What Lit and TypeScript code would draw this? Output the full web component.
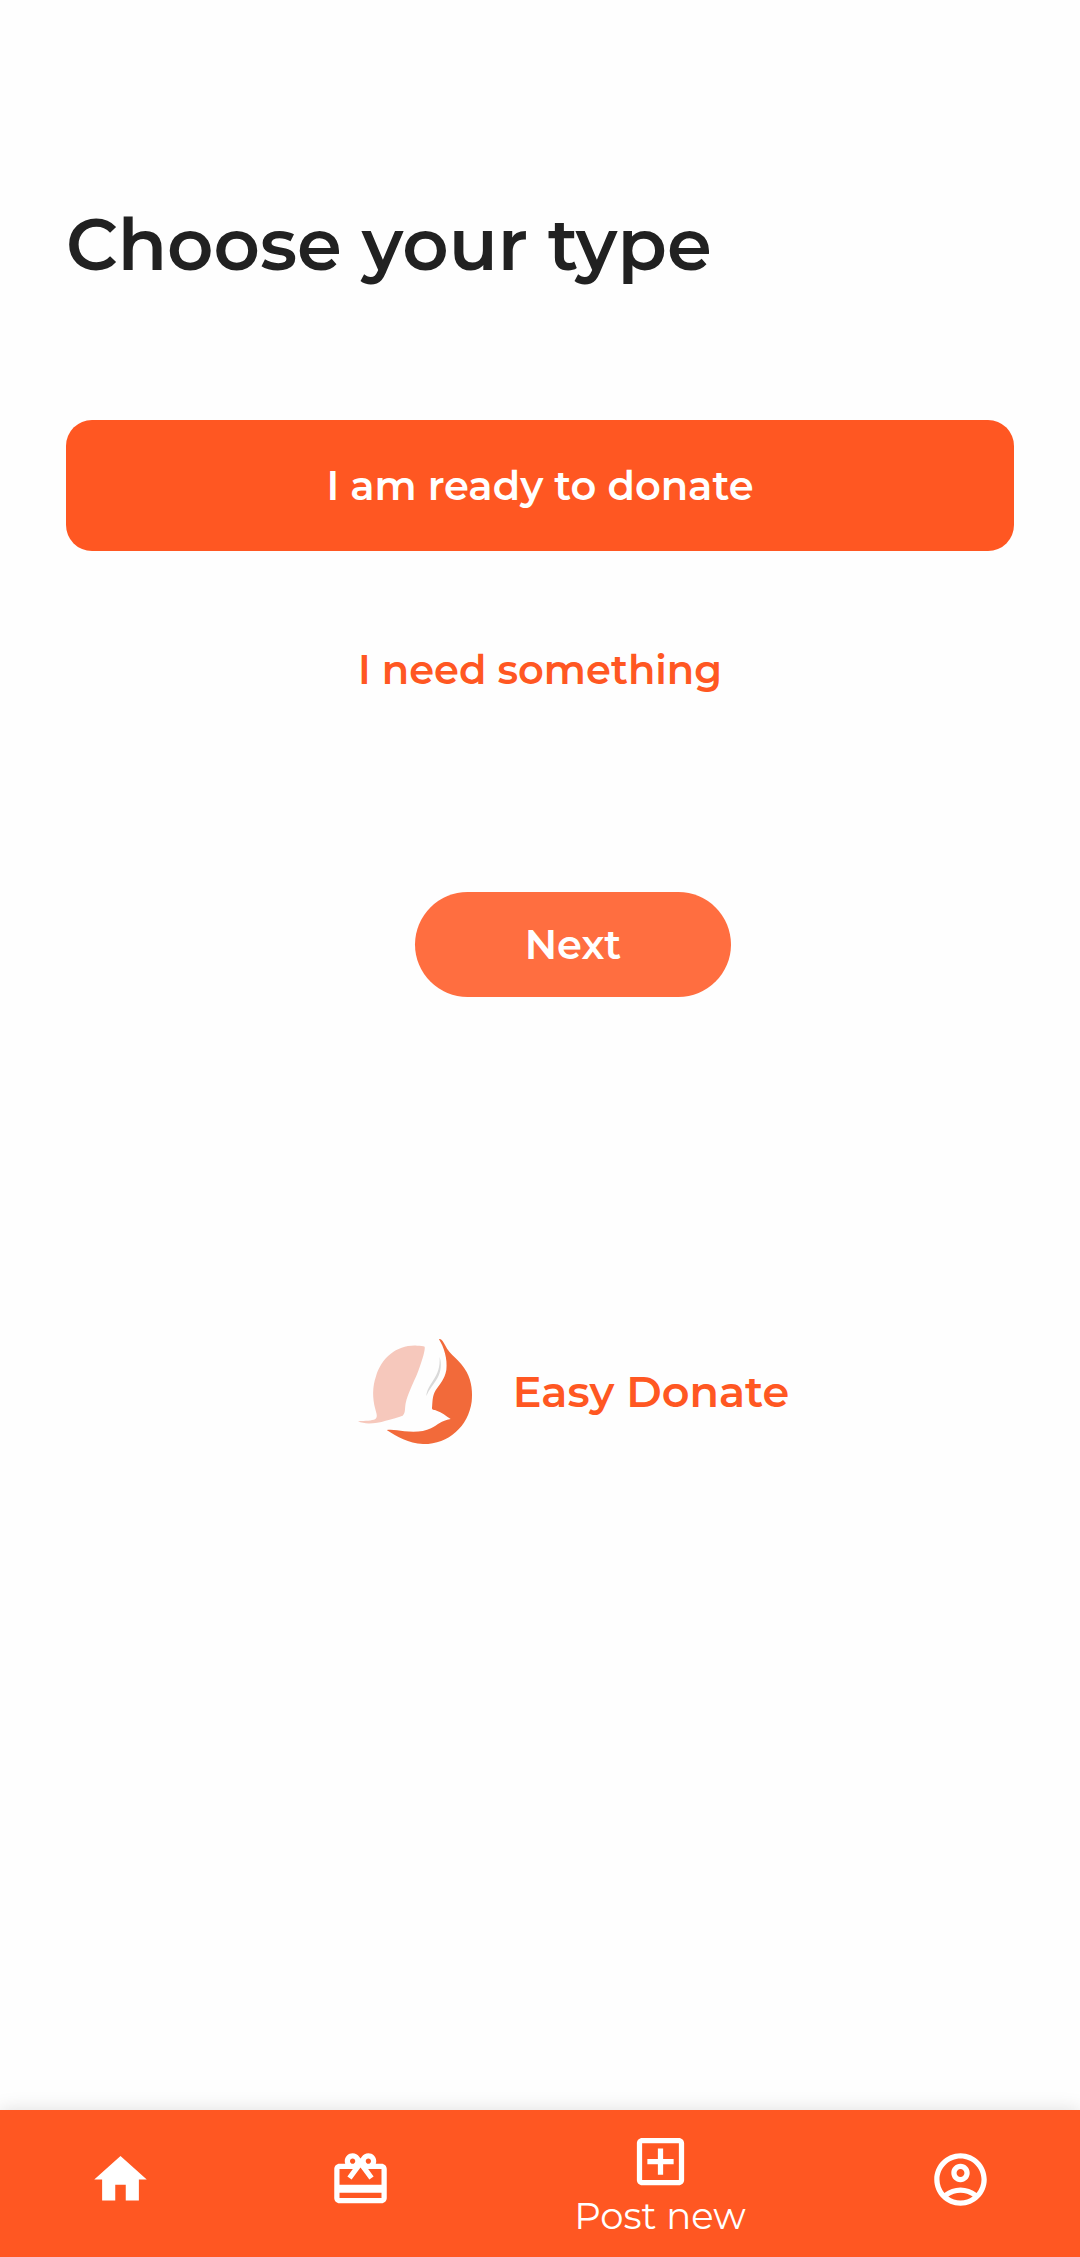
import { LitElement, html, css, svg } from "lit";
import { customElement, state } from "lit/decorators.js";
import { classMap } from "lit/directives/class-map.js";

type DonorType = "donate" | "need";

const ICONS = {
  home: svg`<path d="M10 20v-6h4v6h5v-8h3L12 3 2 12h3v8z"/>`,
  gift: svg`<path d="M20 6h-2.18c.11-.31.18-.65.18-1 0-1.66-1.34-3-3-3-1.05 0-1.96.54-2.5 1.35l-.5.67-.5-.68C10.96 2.54 10.05 2 9 2 7.34 2 6 3.34 6 5c0 .35.07.69.18 1H4c-1.11 0-1.99.89-1.99 2L2 19c0 1.11.89 2 2 2h16c1.11 0 2-.89 2-2V8c0-1.11-.89-2-2-2zm-5-2c.55 0 1 .45 1 1s-.45 1-1 1-1-.45-1-1 .45-1 1-1zM9 4c.55 0 1 .45 1 1s-.45 1-1 1-1-.45-1-1 .45-1 1-1zm11 15H4v-2h16v2zm0-5H4V8h5.08L7 10.83 8.62 12 11 8.76l1-1.36 1 1.36L15.38 12 17 10.83 14.92 8H20v6z"/>`,
  add: svg`<path d="M19 3H5c-1.11 0-2 .9-2 2v14c0 1.1.89 2 2 2h14c1.1 0 2-.9 2-2V5c0-1.1-.9-2-2-2zm0 16H5V5h14v14zm-8-2h2v-4h4v-2h-4V7h-2v4H7v2h4z"/>`,
  account: svg`<path d="M12 2C6.48 2 2 6.48 2 12s4.48 10 10 10 10-4.48 10-10S17.52 2 12 2zM7.35 18.5C8.66 17.56 10.26 17 12 17s3.34.56 4.65 1.5C15.34 19.44 13.74 20 12 20s-3.34-.56-4.65-1.5zm10.79-1.38C16.45 15.8 14.32 15 12 15s-4.45.8-6.14 2.12C4.7 15.73 4 13.95 4 12c0-4.42 3.58-8 8-8s8 3.58 8 8c0 1.95-.7 3.73-1.86 5.12zM12 6c-1.93 0-3.5 1.57-3.5 3.5S10.07 13 12 13s3.5-1.57 3.5-3.5S13.93 6 12 6zm0 5c-.83 0-1.5-.67-1.5-1.5S11.17 8 12 8s1.5.67 1.5 1.5S12.83 11 12 11z"/>`,
};

@customElement("bottom-nav")
export class BottomNav extends LitElement {
  static styles = css`
    :host { display: block; }
    .bar {
      display: grid;
      grid-template-columns: 2fr 2fr 3fr 2fr;
      min-height: 147px;
      background: #ff5722;
      box-shadow: 0 0 18px rgba(0, 0, 0, 0.13);
    }
    .item {
      display: flex;
      flex-direction: column;
      align-items: center;
      padding-top: 38px;
      color: #fff;
      text-decoration: none;
    }
    .current { padding-top: 20px; }
    .icon { width: 63px; height: 63px; fill: currentColor; }
    .label { font-size: 37px; font-weight: 400; line-height: 46px; }
  `;

  render() {
    return html`
      <nav class="bar" aria-label="Main">
        <a class="item" href="#home" aria-label="Home"><svg class="icon" viewBox="0 0 24 24">${ICONS.home}</svg></a>
        <a class="item" href="#gifts" aria-label="Gifts"><svg class="icon" viewBox="0 0 24 24">${ICONS.gift}</svg></a>
        <a class="item current" href="#post" aria-current="page">
          <svg class="icon" viewBox="0 0 24 24">${ICONS.add}</svg>
          <span class="label">Post new</span>
        </a>
        <a class="item" href="#account" aria-label="Account"><svg class="icon" viewBox="0 0 24 24">${ICONS.account}</svg></a>
      </nav>
    `;
  }
}

@customElement("app-root")
export class AppRoot extends LitElement {
  static styles = css`
    :host {
      display: flex;
      flex-direction: column;
      min-height: 100vh;
      background: #fefefe;
      font-family: Montserrat, Inter, "Open Sans", sans-serif;
    }
    .content {
      flex: 1;
      display: flex;
      flex-direction: column;
      padding: 199px 66px 0;
    }
    .title {
      margin: 0;
      color: #212121;
      font-size: 72px;
      font-weight: 600;
      line-height: 90px;
    }
    .choices {
      display: flex;
      flex-direction: column;
      gap: 53px;
      margin-top: 131px;
    }
    button {
      border: 0;
      font: inherit;
      font-size: 40px;
      font-weight: 600;
      line-height: 52px;
      cursor: pointer;
    }
    .choice {
      min-height: 131px;
      border-radius: 26px;
      background: transparent;
      color: #ff5722;
    }
    .selected { background: #ff5722; color: #fff; }
    .lower {
      display: flex;
      flex-direction: column;
      align-items: center;
      gap: 341px;
      margin-top: 157px;
      padding-left: 66px;
    }
    .next {
      min-width: 316px;
      min-height: 105px;
      border-radius: 53px;
      background: #ff6e40;
      color: #fff;
    }
    .brand {
      display: flex;
      align-items: center;
      gap: 40px;
      color: #ff5722;
      font-size: 43px;
      font-weight: 600;
      line-height: 54px;
    }
    .logo { width: 116px; height: 107px; }
  `;

  @state() private selected: DonorType = "donate";

  private choice(type: DonorType, label: string) {
    const active = this.selected === type;
    return html`<button
      type="button"
      class=${classMap({ choice: true, selected: active })}
      aria-pressed=${active ? "true" : "false"}
      @click=${() => (this.selected = type)}
    >${label}</button>`;
  }

  render() {
    return html`
      <main class="content">
        <h1 class="title">Choose your type</h1>
        <div class="choices">
          ${this.choice("donate", "I am ready to donate")}
          ${this.choice("need", "I need something")}
        </div>
        <div class="lower">
          <button type="button" class="next">Next</button>
          <div class="brand">
            <svg class="logo" viewBox="48 54 348 321" aria-hidden="true">
              <path fill="#f6c8bc" d="M251 80C253 89 245 116 236 141C224 178 200 218 194 250C191 265 194 280 185 287C171 293 155 296 134 302C105 311 71 314 51 304C74 303 93 302 102 298C111 292 107 283 103 268C94 234 94 200 105 169C123 111 169 74 228 77C238 77 247 77 251 80Z"/>
              <path fill="#f26a3a" d="M294 58C299 54 306 63 312 75C327 107 357 119 377 156C393 185 395 220 392 245C382 319 322 373 246 372C202 370 169 351 137 330C152 327 170 331 190 334C220 337 249 336 270 325C290 315 300 302 329 297C315 288 302 276 287 272C279 269 273 271 273 264C275 247 273 229 284 211C297 191 311 178 316 150C320 117 309 82 294 58Z"/>
              <path fill="#d9d9d9" d="M296 111C302 130 301 154 289 175C278 194 264 208 256 228C257 211 266 198 275 184C291 159 297 143 296 111Z"/>
            </svg>
            <span>Easy Donate</span>
          </div>
        </div>
      </main>
      <bottom-nav></bottom-nav>
    `;
  }
}
